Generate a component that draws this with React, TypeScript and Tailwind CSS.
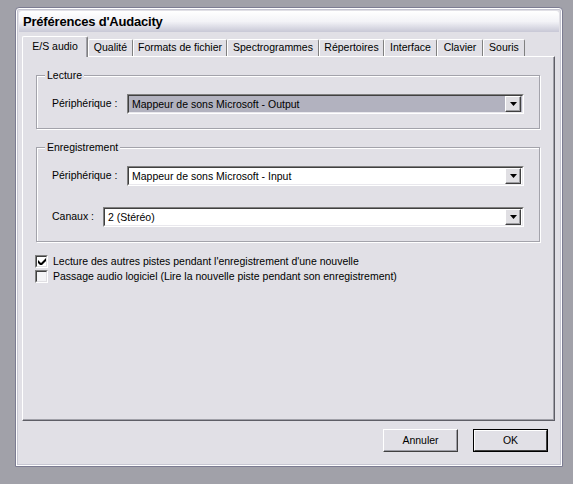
import React from "react";

const font = { fontFamily: '"Liberation Sans", Arial, sans-serif' };

function Arrow() {
  return (
    <div className="w-[16px] h-[16px] bg-[#e0dfe3] border border-t-white border-l-white border-r-[#404040] border-b-[#404040] shadow-[inset_-1px_-1px_0_#9d9da1] flex items-center justify-center">
      <svg width="7" height="4" viewBox="0 0 7 4">
        <path d="M0 0H7L3.5 4Z" fill="#000" />
      </svg>
    </div>
  );
}

function Combo({ text, width, selected }: { text: string; width: number; selected?: boolean }) {
  return (
    <div
      className="h-[20px] border border-t-[#808080] border-l-[#808080] border-r-white border-b-white"
      style={{ width }}
    >
      <div className={`h-full border border-t-[#404040] border-l-[#404040] border-r-[#e9e8ed] border-b-[#e9e8ed] flex items-center justify-between pr-[1px] ${selected ? "bg-[#b2b2bf]" : "bg-white"}`}>
        <span className="pl-[3px] text-[10.5px] text-black leading-none">{text}</span>
        <Arrow />
      </div>
    </div>
  );
}

function Group({ title, children, height }: { title: string; children: React.ReactNode; height: number }) {
  return (
    <div className="relative w-[504px] border border-[#a3a3ab] shadow-[inset_1px_1px_0_#fff,1px_1px_0_#fff]" style={{ height }}>
      <span className="absolute left-[8px] top-[-8px] bg-[#e1e0e6] px-[2px] text-[10.5px] leading-[14px] text-black">{title}</span>
      {children}
    </div>
  );
}

function Check({ checked, label }: { checked: boolean; label: string }) {
  return (
    <div className="flex items-center h-[14px]">
      <div className="w-[13px] h-[13px] border border-t-[#808080] border-l-[#808080] border-r-white border-b-white">
        <div className={`w-full h-full border border-t-[#404040] border-l-[#404040] border-r-[#e0dfe3] border-b-[#e0dfe3] flex items-center justify-center ${checked ? "bg-white" : "bg-[#f4f4f6]"}`}>
          {checked && (
            <svg width="8" height="8" viewBox="0 0 8 8">
              <path d="M0 3L3 6L8 1V4L3 9L0 6Z" fill="#000" />
            </svg>
          )}
        </div>
      </div>
      <span className="ml-[5px] text-[10.5px] text-black leading-none">{label}</span>
    </div>
  );
}

const tabs = ["Qualité", "Formats de fichier", "Spectrogrammes", "Répertoires", "Interface", "Clavier", "Souris"];
const tabW = [45, 94, 92, 65, 53, 46, 42];

export default function App() {
  return (
    <div className="w-[573px] h-[484px] bg-[#a1a1a9] pt-[7px] pl-[15px]" style={font}>
      <div className="w-[548px] h-[460px] bg-[#e1e0e6] border border-[#7c7c92] rounded-t-[4px] shadow-[inset_0_0_0_1px_#ffffff,inset_0_0_0_2px_#c6c6d2] flex flex-col p-[3px]">
        <div className="h-[21px] bg-gradient-to-b from-white via-[#f3f3f7] to-[#c8c8d6] rounded-t-[3px] flex items-center pl-[4px]">
          <span className="text-[13px] font-bold text-black tracking-[-0.2px]">Préférences d'Audacity</span>
        </div>
        <div className="pl-[3px] pt-[5px] flex flex-col">
          <div className="flex items-end h-[20px] relative z-10">
            <div className="w-[66px] h-[21px] bg-[#e1e0e6] border border-b-0 border-t-white border-l-white border-r-[#808080] shadow-[inset_-1px_0_0_#a0a0a8] flex items-center justify-center text-[10.5px] text-black rounded-t-[2px]">
              E/S audio
            </div>
            {tabs.map((t, i) => (
              <div
                key={t}
                className="h-[17px] mb-[1px] bg-[#e1e0e6] border border-b-0 border-t-white border-l-white border-r-[#808080] flex items-center justify-center text-[10.5px] text-black rounded-t-[2px]"
                style={{ width: tabW[i] }}
              >
                {t}
              </div>
            ))}
          </div>
          <div className="w-[533px] h-[365px] -mt-[1px] border border-t-white border-l-white border-r-[#5e5e66] border-b-[#5e5e66] shadow-[inset_-1px_-1px_0_#a0a0a8] pl-[13px] pt-[18px] flex flex-col">
            <Group title="Lecture" height={54}>
              <div className="flex items-center mt-[18px] ml-[15px]">
                <span className="text-[10.5px] text-black w-[75px]">Périphérique :</span>
                <Combo text="Mappeur de sons Microsoft - Output" width={397} selected />
              </div>
            </Group>
            <div className="h-[18px]" />
            <Group title="Enregistrement" height={95}>
              <div className="flex items-center mt-[18px] ml-[15px]">
                <span className="text-[10.5px] text-black w-[75px]">Périphérique :</span>
                <Combo text="Mappeur de sons Microsoft - Input" width={397} />
              </div>
              <div className="flex items-center mt-[21px] ml-[15px]">
                <span className="text-[10.5px] text-black w-[51px]">Canaux :</span>
                <Combo text="2 (Stéréo)" width={421} />
              </div>
            </Group>
            <div className="mt-[12px] ml-[-1px] flex flex-col gap-[1px]">
              <Check checked label="Lecture des autres pistes pendant l'enregistrement d'une nouvelle" />
              <Check checked={false} label="Passage audio logiciel (Lire la nouvelle piste pendant son enregistrement)" />
            </div>
          </div>
          <div className="flex justify-end gap-[15px] mt-[8px] pr-[11px]">
            <div className="w-[75px] h-[23px] bg-[#e1e0e6] border border-t-white border-l-white border-r-[#404040] border-b-[#404040] shadow-[inset_-1px_-1px_0_#9d9da5] flex items-center justify-center text-[10.5px] text-black">
              Annuler
            </div>
            <div className="w-[75px] h-[23px] border border-black">
              <div className="w-full h-full bg-[#e1e0e6] border border-t-white border-l-white border-r-[#404040] border-b-[#404040] flex items-center justify-center text-[10.5px] text-black">
                OK
              </div>
            </div>
          </div>
        </div>
      </div>
    </div>
  );
}
